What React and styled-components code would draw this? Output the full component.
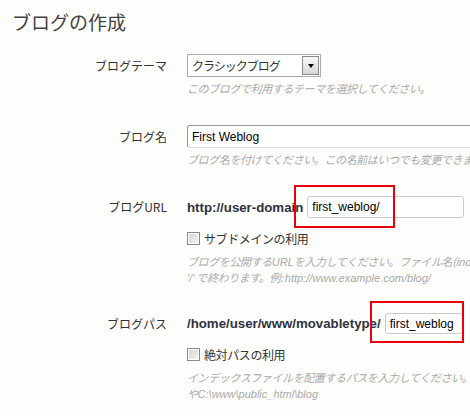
import React from "react";
import styled, { createGlobalStyle } from "styled-components";

const GlobalStyle = createGlobalStyle`
  body {
    margin: 0;
    background: #fdfdfb;
    overflow: hidden;
    font-family: "Liberation Sans", "Noto Sans CJK JP", sans-serif;
    color: #333;
  }
`;

const Page = styled.div`
  width: 640px;
  padding: 12px 0 0 12px;
`;

const Title = styled.h1`
  margin: 0 0 22px;
  font-size: 19px;
  line-height: 20px;
  font-weight: normal;
  color: #444;
  font-family: "Noto Sans CJK JP", sans-serif;
`;

const Row = styled.div`
  display: grid;
  grid-template-columns: 155px 1fr;
  column-gap: 20px;
  margin-bottom: ${(p) => p.$gap || 29}px;
`;

const Label = styled.div`
  text-align: right;
  font-size: 12px;
  line-height: ${(p) => p.$h || 23}px;
  font-family: "Noto Sans CJK JP", sans-serif;
  color: #333;
  white-space: nowrap;
`;

const Field = styled.div`
  display: flex;
  flex-direction: column;
  min-width: 0;
`;

const Line = styled.div`
  display: flex;
  align-items: center;
  height: ${(p) => p.$h || 23}px;
  white-space: nowrap;
`;

const Select = styled.div`
  position: relative;
  width: 128px;
  height: 21px;
  border: 1px solid #a5acb2;
  background: #fff;
  display: flex;
  align-items: center;
  padding-left: 4px;
  box-sizing: content-box;
  font-size: 12px;
  font-family: "Noto Sans CJK JP", sans-serif;
  letter-spacing: -1px;
`;

const SelectButton = styled.span`
  position: absolute;
  right: 1px;
  top: 1px;
  width: 15px;
  height: 17px;
  border: 1px solid #8a8a8a;
  background: linear-gradient(#fafafa, #d6d6d6);
  display: flex;
  align-items: center;
  justify-content: center;

  &::after {
    content: "";
    border-left: 3px solid transparent;
    border-right: 3px solid transparent;
    border-top: 4px solid #000;
  }
`;

const TextInput = styled.div`
  width: ${(p) => p.$w}px;
  height: ${(p) => p.$h || 21}px;
  border: 1px solid #ccc;
  border-color: ${(p) => (p.$inset ? "#999 #ddd #ddd #999" : "#ccc")};
  border-radius: 3px;
  background: #fff;
  box-sizing: content-box;
  padding-left: 4px;
  display: flex;
  align-items: center;
  font-size: 12px;
  color: #000;
  flex-shrink: 0;
`;

const Prefix = styled.span`
  font-weight: bold;
  font-size: 13.25px;
  color: #2f3340;
  margin-right: 4px;
`;

const Marked = styled.span`
  position: relative;
  display: inline-flex;
`;

const Highlight = styled.span`
  position: absolute;
  left: ${(p) => p.$x}px;
  top: ${(p) => p.$y}px;
  width: ${(p) => p.$w}px;
  height: ${(p) => p.$h}px;
  border: 2px solid #e8000b;
  box-sizing: border-box;
  pointer-events: none;
`;

const Check = styled.label`
  display: flex;
  align-items: center;
  gap: 4px;
  height: 18px;
  margin-top: ${(p) => p.$top}px;
  font-size: 12px;
  font-family: "Noto Sans CJK JP", sans-serif;
  color: #333;
  letter-spacing: -0.4px;
`;

const Box = styled.span`
  width: 11px;
  height: 11px;
  border: 1px solid #888;
  background: linear-gradient(135deg, #d4d4d4, #f4f4f4);
  box-shadow: inset 0 0 0 1px #fff;
`;

const Help = styled.div`
  margin-top: ${(p) => p.$top || 4}px;
  font-size: 11px;
  line-height: 15px;
  font-style: italic;
  color: #aaa;
  white-space: nowrap;
  font-family: "Noto Sans CJK JP", sans-serif;
  letter-spacing: -0.4px;
`;

const Latin = styled.span`
  font-family: "Liberation Sans", sans-serif;
  letter-spacing: 0;
`;

export default function App() {
  return (
    <>
      <GlobalStyle />
      <Page>
        <Title>ブログの作成</Title>

        <Row>
          <Label>ブログテーマ</Label>
          <Field>
            <Select>
              クラシックブログ
              <SelectButton />
            </Select>
            <Help>このブログで利用するテーマを選択してください。</Help>
          </Field>
        </Row>

        <Row>
          <Label>ブログ名</Label>
          <Field>
            <TextInput $w={320} $inset>First Weblog</TextInput>
            <Help>ブログ名を付けてください。この名前はいつでも変更できます。</Help>
          </Field>
        </Row>

        <Row $gap={27}>
          <Label $h={22}>ブログURL</Label>
          <Field>
            <Line $h={22}>
              <Prefix>http://user-domain</Prefix>
              <Marked>
                <TextInput $w={151} $h={20}>first_weblog/</TextInput>
                <Highlight $x={-13} $y={-11} $w={101} $h={43} />
              </Marked>
            </Line>
            <Check $top={11}>
              <Box />
              サブドメインの利用
            </Check>
            <Help $top={7}>
              ブログを公開する<Latin>URL</Latin>を入力してください。ファイル名(index.htmlなど)を含めず、
              <br />
              <Latin>'/'</Latin> で終わります。例: <Latin>http://www.example.com/blog/</Latin>
            </Help>
          </Field>
        </Row>

        <Row>
          <Label $h={21}>ブログパス</Label>
          <Field>
            <Line $h={21}>
              <Prefix>/home/user/www/movabletype/</Prefix>
              <Marked>
                <TextInput $w={72} $h={19}>first_weblog</TextInput>
                <Highlight $x={-15} $y={-12} $w={94} $h={42} />
              </Marked>
            </Line>
            <Check $top={11}>
              <Box />
              絶対パスの利用
            </Check>
            <Help $top={7}>
              インデックスファイルを配置するパスを入力してください。例: <Latin>/home/melody/public_html/blog</Latin>
              <br />
              や<Latin>C:\www\public_html\blog</Latin>
            </Help>
          </Field>
        </Row>
      </Page>
    </>
  );
}
